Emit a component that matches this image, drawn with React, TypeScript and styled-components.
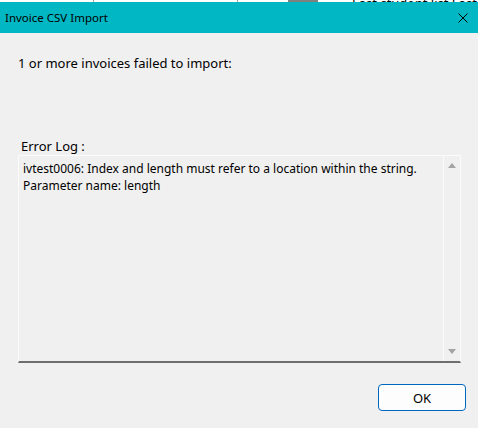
import React from "react";
import styled, { createGlobalStyle } from "styled-components";

const GlobalStyle = createGlobalStyle`
  html, body {
    margin: 0;
    padding: 0;
    background: #f0f0f0;
  }
  body {
    font-family: "Noto Sans", "Open Sans", "Liberation Sans", sans-serif;
    font-size: 13px;
    color: #000;
  }
`;

const Window = styled.div`
  width: 478px;
  height: 428px;
  display: flex;
  flex-direction: column;
  background: #f0f0f0;
  overflow: hidden;
`;

const BehindStrip = styled.div`
  height: 2px;
  background: #fff;
  overflow: hidden;
  position: relative;
  flex-shrink: 0;
`;

const BehindLine = styled.div<{ $left: number }>`
  position: absolute;
  top: 0;
  bottom: 0;
  left: ${p => p.$left}px;
  width: 1px;
  background: #a0a0a0;
`;

const BehindBlock = styled.div`
  position: absolute;
  top: 0;
  bottom: 0;
  left: 288px;
  width: 30px;
  background: #808080;
`;

const BehindText = styled.div`
  position: absolute;
  left: 352px;
  bottom: -10px;
  font-size: 13px;
  white-space: nowrap;
  color: #000;
`;

const TitleBar = styled.div`
  height: 31px;
  background: #00b7c3;
  display: flex;
  align-items: center;
  justify-content: space-between;
  padding: 0 10px 0 5px;
  flex-shrink: 0;
`;

const Title = styled.span`
  font-size: 11.5px;
  color: #000;
  padding-bottom: 1px;
`;

const CloseIcon = styled.svg`
  width: 10px;
  height: 10px;
  display: block;
`;

const Body = styled.div`
  flex: 1;
  display: flex;
  flex-direction: column;
  padding: 21px 12px 0 18px;
`;

const Message = styled.div`
  line-height: 18px;
`;

const LogLabel = styled.div`
  margin-top: 65px;
  padding-left: 3px;
  line-height: 18px;
`;

const LogBox = styled.div`
  width: 443px;
  height: 208px;
  box-sizing: border-box;
  display: flex;
  border-top: 1px solid #fbfbfb;
  border-left: 1px solid #fbfbfb;
  border-right: 1px solid #fbfbfb;
  border-bottom: 2px solid #6e6e6e;
`;

const LogText = styled.div`
  flex: 1;
  padding: 4px 4px;
  font-size: 12px;
  line-height: 17px;
  white-space: nowrap;
  overflow: hidden;
`;

const ScrollBar = styled.div`
  width: 16px;
  border-left: 1px solid #fbfbfb;
  display: flex;
  flex-direction: column;
  justify-content: space-between;
  align-items: center;
  padding: 7px 0 7px;
`;

const Arrow = styled.div<{ $down?: boolean }>`
  width: 0;
  height: 0;
  border-left: 4px solid transparent;
  border-right: 4px solid transparent;
  ${p =>
    p.$down
      ? "border-top: 5px solid #a3a3a3;"
      : "border-bottom: 5px solid #a3a3a3;"}
`;

const Footer = styled.div`
  display: flex;
  justify-content: flex-end;
  margin-top: 21px;
`;

const OkButton = styled.button`
  width: 88px;
  height: 27px;
  box-sizing: border-box;
  border: 1px solid #0067c0;
  border-radius: 4px;
  background: #fdfdfd;
  font-family: inherit;
  font-size: 13px;
  color: #000;
  padding: 0;
`;

export default function App() {
  return (
    <>
      <GlobalStyle />
      <Window>
        <BehindStrip>
          <BehindLine $left={93} />
          <BehindLine $left={237} />
          <BehindBlock />
          <BehindText>Last student list Last stud</BehindText>
        </BehindStrip>
        <TitleBar>
          <Title>Invoice CSV Import</Title>
          <CloseIcon viewBox="0 0 10 10">
            <path d="M0.5 0.5 L9.5 9.5 M9.5 0.5 L0.5 9.5" stroke="#000" strokeWidth="1" fill="none" />
          </CloseIcon>
        </TitleBar>
        <Body>
          <Message>1 or more invoices failed to import:</Message>
          <LogLabel>Error Log :</LogLabel>
          <LogBox>
            <LogText>
              ivtest0006: Index and length must refer to a location within the string.
              <br />
              Parameter name: length
            </LogText>
            <ScrollBar>
              <Arrow />
              <Arrow $down />
            </ScrollBar>
          </LogBox>
          <Footer>
            <OkButton>OK</OkButton>
          </Footer>
        </Body>
      </Window>
    </>
  );
}
